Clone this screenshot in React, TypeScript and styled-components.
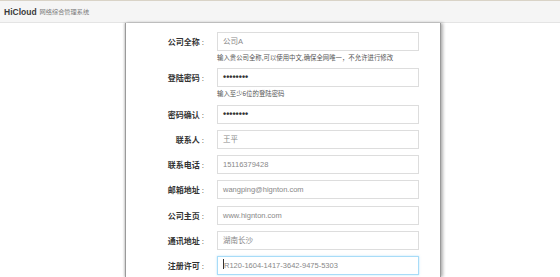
import React from 'react'
import styled, { createGlobalStyle } from 'styled-components'

// ─── Data ─────────────────────────────────────────────────────────────────────

interface Field {
  id: string
  label: string
  value: string
  password?: boolean
  hint?: string
  focused?: boolean
}

const FIELDS: Field[] = [
  { id: 'name', label: '公司全称', value: '公司A', hint: '输入贵公司全称,可以使用中文,确保全网唯一，不允许进行修改' },
  { id: 'pwd', label: '登陆密码', value: '••••••••', password: true, hint: '输入至少6位的登陆密码' },
  { id: 'pwd2', label: '密码确认', value: '••••••••', password: true },
  { id: 'contact', label: '联系人', value: '王平' },
  { id: 'phone', label: '联系电话', value: '15116379428' },
  { id: 'mail', label: '邮箱地址', value: 'wangping@hignton.com' },
  { id: 'home', label: '公司主页', value: 'www.hignton.com' },
  { id: 'addr', label: '通讯地址', value: '湖南长沙' },
  { id: 'license', label: '注册许可', value: 'R120-1604-1417-3642-9475-5303', focused: true },
]

// ─── Styled ───────────────────────────────────────────────────────────────────

const GlobalStyle = createGlobalStyle`
  html, body {
    margin: 0;
    padding: 0;
    background: #ffffff;
    font-family: "Liberation Sans", "Noto Sans CJK SC", sans-serif;
    overflow: hidden;
  }
`

const Page = styled.div`
  width: 560px;
  height: 277px;
  display: flex;
  flex-direction: column;
`

const TopBar = styled.header`
  height: 21px;
  display: flex;
  align-items: center;
  gap: 3px;
  padding-left: 4px;
  background: #f5f5f5;
  border-top: 1px solid #d9d3c7;
  border-bottom: 1px solid #e4e4e4;
`

const Brand = styled.span`
  font-size: 8.5px;
  font-weight: bold;
  color: #3a3a3a;
`

const Subtitle = styled.span`
  font-size: 6.2px;
  color: #7a7a7a;
  font-family: "Noto Sans CJK SC", sans-serif;
`

const Card = styled.main`
  width: 314px;
  margin-left: 125px;
  flex: 1;
  background: #ffffff;
  border-left: 1px solid #9a9a9a;
  border-right: 1px solid #9a9a9a;
  box-shadow: -1px 0 2px rgba(0, 0, 0, 0.2), 2px 0 3px rgba(0, 0, 0, 0.3);
  padding-top: 9px;
  display: flex;
  flex-direction: column;
  gap: 6.3px;
`

const Row = styled.div`
  display: grid;
  grid-template-columns: 78px 202px;
  column-gap: 13px;
  align-items: start;
`

const Label = styled.label`
  height: 19px;
  line-height: 19px;
  text-align: right;
  font-size: 8px;
  font-weight: bold;
  color: #333333;
  font-family: "Noto Sans CJK SC", sans-serif;
`

const Colon = styled.span`
  margin-left: 2px;
  font-family: "Liberation Sans", sans-serif;
  font-weight: normal;
`

const FieldCol = styled.div`
  display: flex;
  flex-direction: column;
`

const Input = styled.div<{ $focused?: boolean; $password?: boolean }>`
  box-sizing: border-box;
  height: 19px;
  line-height: 17px;
  padding-left: 5px;
  border: 1px solid ${({ $focused }) => ($focused ? '#a8dcf8' : '#dddddd')};
  box-shadow: ${({ $focused }) => ($focused ? '0 0 2px rgba(120, 200, 245, 0.5)' : 'none')};
  font-size: ${({ $password }) => ($password ? '9px' : '7.5px')};
  font-weight: ${({ $password }) => ($password ? 'bold' : 'normal')};
  color: ${({ $password }) => ($password ? '#333333' : '#888888')};
  white-space: nowrap;
  overflow: hidden;
`

const Caret = styled.span`
  display: inline-block;
  width: 1px;
  height: 10px;
  background: #333;
  vertical-align: -1px;
`

const Hint = styled.div`
  margin-top: 2px;
  height: 9px;
  line-height: 9px;
  font-size: 6.4px;
  color: #555555;
  font-family: "Noto Sans CJK SC", sans-serif;
  white-space: nowrap;
`

// ─── Componente ───────────────────────────────────────────────────────────────

export default function App() {
  return (
    <Page>
      <GlobalStyle />
      <TopBar>
        <Brand>HiCloud</Brand>
        <Subtitle>网络综合管理系统</Subtitle>
      </TopBar>

      <Card>
        {FIELDS.map(field => (
          <Row key={field.id}>
            <Label>
              {field.label}
              <Colon>:</Colon>
            </Label>
            <FieldCol>
              <Input $focused={field.focused} $password={field.password}>
                {field.focused && <Caret />}
                {field.value}
              </Input>
              {field.hint && <Hint>{field.hint}</Hint>}
            </FieldCol>
          </Row>
        ))}
      </Card>
    </Page>
  )
}
